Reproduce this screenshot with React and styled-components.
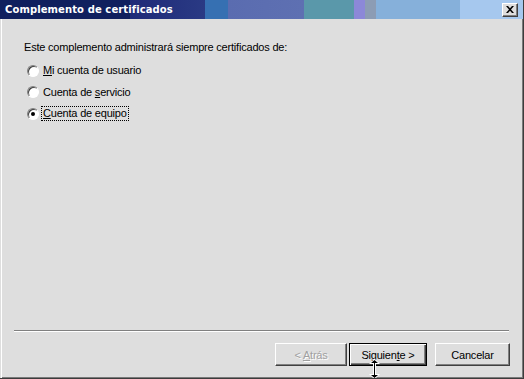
import styled, { createGlobalStyle } from "styled-components";

const Global = createGlobalStyle`
  html, body { margin: 0; padding: 0; background: #dcdcdc; }
  body { font-family: "Liberation Sans", Arial, sans-serif; font-size: 11px; color: #000; }
`;

const Window = styled.div`
  position: relative;
  width: 524px;
  height: 379px;
  box-sizing: border-box;
  display: flex;
  flex-direction: column;
  background: #dedede;
  border-right: 1px solid #3c3c3c;
  border-bottom: 1px solid #3c3c3c;
  box-shadow: inset 1px 0 0 #dedede, inset 2px 0 0 #ffffff, inset -1px -1px 0 #7a7a7a;
  overflow: hidden;
`;

const TitleBar = styled.div`
  height: 19px;
  display: flex;
  align-items: center;
  justify-content: space-between;
  padding: 0 5px 0 5px;
  background: linear-gradient(
    to right,
    #10205e 0px, #10205e 130px,
    #1e2a78 130px, #2a3a84 205px,
    #3670b2 205px, #3670b2 228px,
    #5a6cb0 228px, #5e70b2 304px,
    #5a98aa 304px, #5a98aa 354px,
    #8c88d8 354px, #8c88d8 365px,
    #8c9cb4 365px, #8c9cb4 376px,
    #86b0da 376px, #86b0da 460px,
    #a6c8ee 460px, #a6c8ee 524px
  );
`;

const Title = styled.span`
  font-family: "DejaVu Sans", Verdana, sans-serif;
  font-weight: bold;
  font-size: 10px;
  color: #ffffff;
  letter-spacing: 0.1px;
`;

const CloseButton = styled.div`
  width: 16px;
  height: 14px;
  box-sizing: border-box;
  background: #dedede;
  border-top: 1px solid #ffffff;
  border-left: 1px solid #ffffff;
  border-right: 1px solid #404040;
  border-bottom: 1px solid #404040;
  box-shadow: inset -1px -1px 0 #808080;
  display: flex;
  align-items: center;
  justify-content: center;
`;

const Body = styled.div`
  flex: 1;
  display: flex;
  flex-direction: column;
  padding: 21px 13px 0 14px;
  letter-spacing: -0.2px;
`;

const Intro = styled.div`
  padding-left: 10px;
  height: 15px;
  line-height: 15px;
`;

const Options = styled.div`
  display: flex;
  flex-direction: column;
  gap: 6.5px;
  margin-top: 8px;
  padding-left: 13px;
`;

const Option = styled.label`
  display: flex;
  align-items: center;
  gap: 3px;
  height: 15px;
`;

const Radio = styled.span`
  position: relative;
  width: 12px;
  height: 12px;
  box-sizing: border-box;
  border-radius: 50%;
  background: #ffffff;
  border: 1px solid;
  border-color: #808080 #ffffff #ffffff #808080;
  box-shadow: inset 1px 1px 0 #404040;
  &::after {
    content: "";
    display: ${(p) => (p.checked ? "block" : "none")};
    position: absolute;
    left: 3px;
    top: 3px;
    width: 4px;
    height: 4px;
    border-radius: 50%;
    background: #000;
  }
`;

const OptionText = styled.span`
  padding: 0 1px;
  line-height: 13px;
  outline: ${(p) => (p.focused ? "1px dotted #000" : "none")};
`;

const Spacer = styled.div`
  flex: 1;
`;

const Separator = styled.div`
  height: 1px;
  margin-right: 1px;
  background: #808080;
  border-bottom: 1px solid #ffffff;
`;

const ButtonRow = styled.div`
  display: flex;
  justify-content: flex-end;
  align-items: center;
  padding: 11px 0 12px 0;
  gap: 8px;
`;

const Pair = styled.div`
  display: flex;
  gap: 2px;
`;

const Button = styled.div`
  width: ${(p) => p.w}px;
  height: 23px;
  box-sizing: border-box;
  display: flex;
  align-items: center;
  justify-content: center;
  background: #dedede;
  color: ${(p) => (p.disabled ? "#a0a0a0" : "#000")};
  text-shadow: ${(p) => (p.disabled ? "1px 1px 0 #ffffff" : "none")};
  border: 1px solid;
  border-color: ${(p) => (p.def ? "#000" : "#ffffff #404040 #404040 #ffffff")};
  box-shadow: ${(p) =>
    p.def
      ? "inset 1px 1px 0 #ffffff, inset -1px -1px 0 #404040, inset -2px -2px 0 #808080"
      : "inset -1px -1px 0 #808080"};
`;

const Cursor = styled.svg`
  position: absolute;
  left: 368px;
  top: 358px;
`;

function U({ children }) {
  return <u>{children}</u>;
}

export default function App() {
  return (
    <>
      <Global />
      <Window>
        <TitleBar>
          <Title>Complemento de certificados</Title>
          <CloseButton>
            <svg width="8" height="7" viewBox="0 0 8 7">
              <path d="M0 0h2l2 2.2L6 0h2L5 3.5 8 7H6L4 4.8 2 7H0l3-3.5z" fill="#000" />
            </svg>
          </CloseButton>
        </TitleBar>
        <Body>
          <Intro>Este complemento administrará siempre certificados de:</Intro>
          <Options>
            <Option>
              <Radio />
              <OptionText>
                <U>M</U>i cuenta de usuario
              </OptionText>
            </Option>
            <Option>
              <Radio />
              <OptionText>
                Cuenta de <U>s</U>ervicio
              </OptionText>
            </Option>
            <Option>
              <Radio checked />
              <OptionText focused>
                <U>C</U>uenta de equipo
              </OptionText>
            </Option>
          </Options>
          <Spacer />
          <Separator />
          <ButtonRow>
            <Pair>
              <Button w={72} disabled>
                <span>
                  {"< "}
                  <U>A</U>trás
                </span>
              </Button>
              <Button w={78} def>
                <span>
                  Siguien<U>t</U>e {">"}
                </span>
              </Button>
            </Pair>
            <Button w={75}>
              <span>Cancelar</span>
            </Button>
          </ButtonRow>
        </Body>
        <Cursor width="13" height="22" viewBox="0 0 13 22">
          <path
            d="M6.5 0.5 L12 6 L8 6 L8 16 L12 16 L6.5 21.5 L1 16 L5 16 L5 6 L1 6 Z"
            fill="#ffffff"
          />
          <path d="M6.5 2 L10 5 L7 5 L7 17 L10 17 L6.5 20 L3 17 L6 17 L6 5 L3 5 Z" fill="#000" />
        </Cursor>
      </Window>
    </>
  );
}
